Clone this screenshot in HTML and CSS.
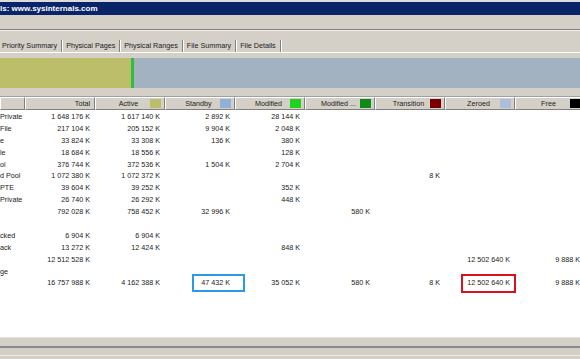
FILE: index.html
```html
<!DOCTYPE html>
<html lang="en">
<head>
    <meta charset="UTF-8">
    <title>RAMMap - Sysinternals: www.sysinternals.com</title>
    <link rel="stylesheet" href="styles.css">
</head>
<body>

<div class="window">
    <div class="titlebar">ls: www.sysinternals.com</div>
    <div class="menubar"></div>

    <!-- Tabs -->
    <div class="tabstrip">
        <span class="tab">Priority Summary</span>
        <span class="tab">Physical Pages</span>
        <span class="tab">Physical Ranges</span>
        <span class="tab">File Summary</span>
        <span class="tab">File Details</span>
    </div>

    <!-- Usage bar -->
    <div class="usage">
        <div class="seg seg-active" style="width: 131px"></div>
        <div class="seg seg-modified" style="width: 3px"></div>
        <div class="seg seg-rest"></div>
    </div>

    <!-- List -->
    <div class="list">
        <div class="list-head">
            <span class="hcell"></span>
            <span class="hcell total">Total</span>
            <span class="hcell"><b>Active</b><i class="sw sw-active"></i></span>
            <span class="hcell"><b>Standby</b><i class="sw sw-standby"></i></span>
            <span class="hcell"><b>Modified</b><i class="sw sw-modified"></i></span>
            <span class="hcell"><b>Modified ...</b><i class="sw sw-modnw"></i></span>
            <span class="hcell"><b>Transition</b><i class="sw sw-transition"></i></span>
            <span class="hcell"><b>Zeroed</b><i class="sw sw-zeroed"></i></span>
            <span class="hcell"><b>Free</b><i class="sw sw-free"></i></span>
        </div>

        <div class="list-body">
            <div class="row"><span class="name">Private</span><span>1 648 176 K</span><span>1 617 140 K</span><span>2 892 K</span><span>28 144 K</span><span></span><span></span><span></span><span></span></div>
            <div class="row"><span class="name">File</span><span>217 104 K</span><span>205 152 K</span><span>9 904 K</span><span>2 048 K</span><span></span><span></span><span></span><span></span></div>
            <div class="row"><span class="name">e</span><span>33 824 K</span><span>33 308 K</span><span>136 K</span><span>380 K</span><span></span><span></span><span></span><span></span></div>
            <div class="row"><span class="name">le</span><span>18 684 K</span><span>18 556 K</span><span></span><span>128 K</span><span></span><span></span><span></span><span></span></div>
            <div class="row"><span class="name">ol</span><span>376 744 K</span><span>372 536 K</span><span>1 504 K</span><span>2 704 K</span><span></span><span></span><span></span><span></span></div>
            <div class="row"><span class="name">d Pool</span><span>1 072 380 K</span><span>1 072 372 K</span><span></span><span></span><span></span><span>8 K</span><span></span><span></span></div>
            <div class="row"><span class="name">PTE</span><span>39 604 K</span><span>39 252 K</span><span></span><span>352 K</span><span></span><span></span><span></span><span></span></div>
            <div class="row"><span class="name">Private</span><span>26 740 K</span><span>26 292 K</span><span></span><span>448 K</span><span></span><span></span><span></span><span></span></div>
            <div class="row"><span class="name"></span><span>792 028 K</span><span>758 452 K</span><span>32 996 K</span><span></span><span>580 K</span><span></span><span></span><span></span></div>
            <div class="row"><span class="name"></span><span></span><span></span><span></span><span></span><span></span><span></span><span></span><span></span></div>
            <div class="row"><span class="name">cked</span><span>6 904 K</span><span>6 904 K</span><span></span><span></span><span></span><span></span><span></span><span></span></div>
            <div class="row"><span class="name">ack</span><span>13 272 K</span><span>12 424 K</span><span></span><span>848 K</span><span></span><span></span><span></span><span></span></div>
            <div class="row"><span class="name"></span><span>12 512 528 K</span><span></span><span></span><span></span><span></span><span></span><span>12 502 640 K</span><span>9 888 K</span></div>
            <div class="row"><span class="name">ge</span><span></span><span></span><span></span><span></span><span></span><span></span><span></span><span></span></div>
            <div class="row"><span class="name"></span><span>16 757 988 K</span><span>4 162 388 K</span><span class="marked">47 432 K<i class="mark mark-blue"></i></span><span>35 052 K</span><span>580 K</span><span>8 K</span><span class="marked">12 502 640 K<i class="mark mark-red"></i></span><span>9 888 K</span></div>
        </div>
    </div>

    <div class="statusbar"></div>
</div>

</body>
</html>
```

FILE: styles.css
```css
body {
    margin: 0;
    background-color: #d4d0c8;
    font-family: "Liberation Sans", Arial, sans-serif;
    font-size: 7.2px;
    color: #222;
    overflow: hidden;
}
.window {
    width: 580px;
    height: 359px;
    overflow: hidden;
}
.titlebar {
    height: 13px;
    border-top: 2px solid #dcdcdc;
    background-color: #0a246a;
    color: white;
    font-weight: bold;
    font-size: 8px;
    line-height: 13px;
}
.menubar {
    height: 14px;
    border-bottom: 1px solid #808080;
}
.tabstrip {
    height: 21px;
    border-top: 1px solid #f4f2ee;
    display: flex;
    align-items: flex-end;
    border-bottom: 1px solid #ffffff;
}
.tab {
    height: 12px;
    line-height: 12px;
    padding: 0 4px 0 3px;
    border-right: 1px solid #808080;
    box-shadow: 1px 0 0 #ffffff;
    margin-right: 1px;
    color: #1a1a1a;
}
.tab:first-child {
    padding-left: 2px;
}
.usage {
    display: flex;
    height: 30px;
    margin-top: 5px;
}
.seg-active {
    background-color: #bcbe6a;
}
.seg-modified {
    background-color: #2fbe3f;
}
.seg-rest {
    flex: 1;
    background-color: #a3b2c1;
}
.list {
    margin-top: 8px;
    border-top: 1px solid #a0a0a0;
    background-color: white;
}
.list-head {
    display: grid;
    grid-template-columns: 25px repeat(8, 70px);
    height: 13px;
    background-color: #d4d0c8;
}
.hcell {
    display: flex;
    align-items: center;
    border-top: 1px solid #ffffff;
    border-left: 1px solid #ffffff;
    border-right: 1px solid #808080;
    border-bottom: 1px solid #808080;
    padding-left: 14px;
    padding-right: 3px;
    white-space: nowrap;
    overflow: hidden;
}
.hcell:first-child {
    padding: 0;
}
.hcell b {
    flex: 1;
    font-weight: normal;
    text-align: center;
}
.hcell.total {
    justify-content: flex-end;
    padding-right: 4px;
}
.sw {
    width: 11px;
    height: 9px;
    margin-left: 3px;
}
.sw-active { background-color: #bcbe6a; }
.sw-standby { background-color: #8fb1d8; }
.sw-modified { background-color: #1ed21e; }
.sw-modnw { background-color: #0f8c18; }
.sw-transition { background-color: #7a0000; }
.sw-zeroed { background-color: #adbfd8; }
.sw-free { background-color: #000000; }
.list-body {
    height: 226px;
    padding-top: 1px;
}
.row {
    display: grid;
    grid-template-columns: 25px repeat(8, 70px);
    height: 11.9px;
    line-height: 11.9px;
}
.row span {
    text-align: right;
    padding-right: 5px;
    white-space: nowrap;
}
.row .name {
    text-align: left;
    padding: 0;
    overflow: hidden;
}
.marked {
    position: relative;
}
.mark {
    position: absolute;
    top: -3px;
    box-sizing: border-box;
    border: 2px solid;
}
.mark-blue {
    left: 27px;
    width: 53px;
    height: 18px;
    border-color: #2a9ae6;
}
.mark-red {
    left: 16px;
    width: 55px;
    height: 19px;
    border-color: #d6121e;
}
.statusbar {
    height: 8px;
    border-top: 1px solid #e4e2dc;
    border-bottom: 2px solid #8a8a8a;
    box-shadow: 0 7px 0 #d4d0c8, 0 8px 0 #eeece8;
}
```
